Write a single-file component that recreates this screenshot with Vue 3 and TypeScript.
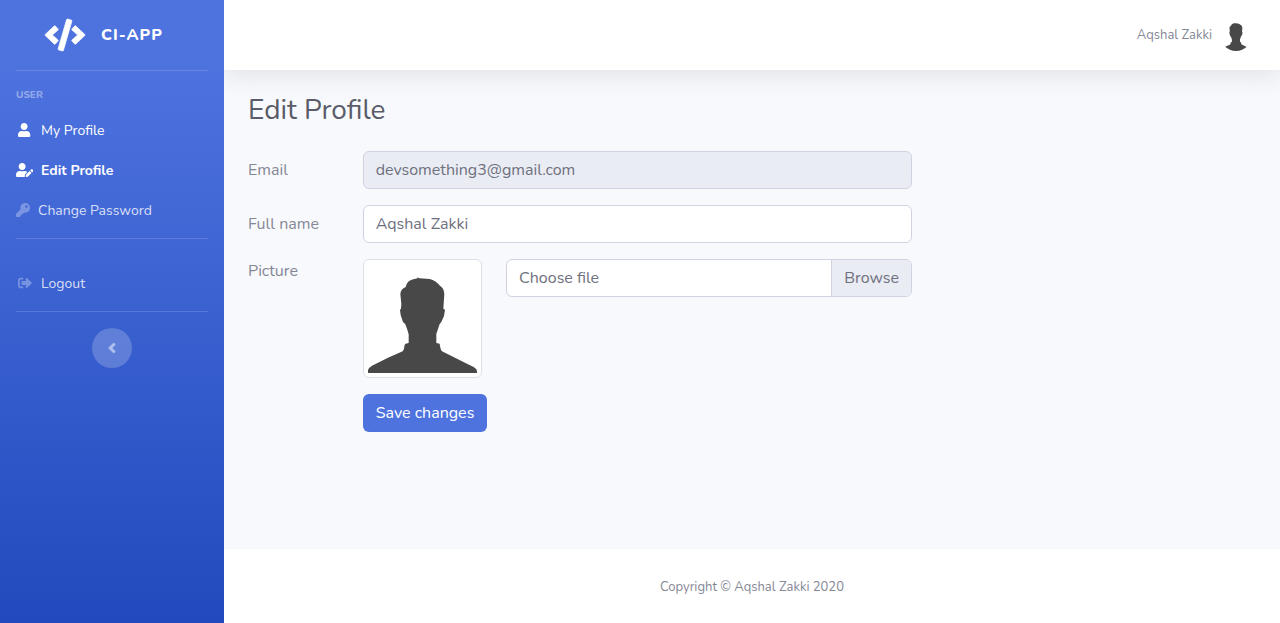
<script setup lang="ts">
import { ref } from 'vue'

interface Icon {
  width: number
  path: string
}

interface NavItem {
  label: string
  icon: Icon
  state: 'plain' | 'lit' | 'active'
  fixed: boolean
}

const code: Icon = {
  width: 640,
  path: 'M278.9 511.5l-61-17.7c-6.4-1.8-10-8.5-8.2-14.9L346.2 8.7c1.8-6.4 8.5-10 14.9-8.2l61 17.7c6.4 1.8 10 8.5 8.2 14.9L293.8 503.3c-1.9 6.4-8.5 10.1-14.9 8.2zm-114-112.2l43.5-46.4c4.6-4.9 4.3-12.7-.8-17.2L117 256l90.6-79.7c5.1-4.5 5.5-12.3.8-17.2l-43.5-46.4c-4.5-4.8-12.1-5.1-17-.5L3.8 247.2c-5.1 4.7-5.1 12.8 0 17.5l144.1 135.1c4.9 4.6 12.5 4.4 17-.5zm327.2.6l144.1-135.1c5.1-4.7 5.1-12.8 0-17.5L492.1 112.1c-4.8-4.5-12.4-4.3-17 .5L431.6 159c-4.6 4.9-4.3 12.7.8 17.2L523 256l-90.6 79.7c-5.1 4.5-5.5 12.3-.8 17.2l43.5 46.4c4.5 4.9 12.1 5.1 17 .6z',
}
const user: Icon = {
  width: 448,
  path: 'M224 256c70.7 0 128-57.3 128-128S294.7 0 224 0 96 57.3 96 128s57.3 128 128 128zm89.6 32h-16.7c-22.2 10.2-46.9 16-72.9 16s-50.6-5.8-72.9-16h-16.7C60.2 288 0 348.2 0 422.4V464c0 26.5 21.5 48 48 48h352c26.5 0 48-21.5 48-48v-41.6c0-74.2-60.2-134.4-134.4-134.4z',
}
const userEdit: Icon = {
  width: 640,
  path: 'M224 256c70.7 0 128-57.3 128-128S294.7 0 224 0 96 57.3 96 128s57.3 128 128 128zm89.6 32h-16.7c-22.2 10.2-46.9 16-72.9 16s-50.6-5.8-72.9-16h-16.7C60.2 288 0 348.2 0 422.4V464c0 26.5 21.5 48 48 48h274.9c-2.4-6.8-3.4-14-2.6-21.3l6.8-60.9 1.2-11.1 7.9-7.9 77.3-77.3c-24.5-27.7-60-45.5-99.9-45.5zm45.3 145.3l-6.8 61c-1.1 10.2 7.5 18.8 17.6 17.6l60.9-6.8 137.9-137.9-71.7-71.7-137.9 137.8zM633 268.9L595.1 231c-9.3-9.3-24.5-9.3-33.8 0l-37.8 37.8-4.1 4.1 71.8 71.7 41.8-41.8c9.3-9.4 9.3-24.5 0-33.9z',
}
const key: Icon = {
  width: 512,
  path: 'M512 176C512 273.2 433.2 352 336 352c-11.2 0-22.2-1.1-32.8-3.1l-24 27A24 24 0 0 1 261.2 384H224v40c0 13.3-10.7 24-24 24h-40v40c0 13.3-10.7 24-24 24H24c-13.3 0-24-10.7-24-24v-78.1c0-6.4 2.5-12.5 7-17l161.8-161.8C163.1 213.8 160 195.3 160 176 160 78.8 238.8 0 336 0c97.5 0 176 78.5 176 176zM336 128c0 26.5 21.5 48 48 48s48-21.5 48-48-21.5-48-48-48-48 21.5-48 48z',
}
const signOut: Icon = {
  width: 512,
  path: 'M497 273L329 441c-15 15-41 4.5-41-17v-96H152c-13.3 0-24-10.7-24-24v-96c0-13.3 10.7-24 24-24h136V88c0-21.4 25.9-32 41-17l168 168c9.3 9.4 9.3 24.6 0 34zM192 436v-40c0-6.6-5.4-12-12-12H96c-17.7 0-32-14.3-32-32V160c0-17.7 14.3-32 32-32h84c6.6 0 12-5.4 12-12V76c0-6.6-5.4-12-12-12H96c-53 0-96 43-96 96v192c0 53 43 96 96 96h84c6.6 0 12-5.4 12-12z',
}
const angleLeft: Icon = {
  width: 256,
  path: 'M31.7 239l136-136c9.4-9.4 24.6-9.4 33.9 0l22.6 22.6c9.4 9.4 9.4 24.6 0 33.9L127.9 256l96.4 96.4c9.4 9.4 9.4 24.6 0 33.9L201.7 409c-9.4 9.4-24.6 9.4-33.9 0l-136-136c-9.5-9.4-9.5-24.6-.1-34z',
}

const silhouette =
  'M0 328V318Q2 311 12 305L60 281L104 262Q109 256 110 242L113 239L122 237V211L118 197L112 181L105 174L98 153L96 137L99 134L100 120L97 90Q98 75 113 69Q117 50 136 46L149 43L146 40L154 43L185 45Q204 50 216 65Q228 72 229 90L226 134L231 137L228 156L220 174L215 180L205 210V237L215 239Q217 256 222 262L300 301L317 309Q327 315 327 321V328Z'

const navItems: NavItem[] = [
  { label: 'My Profile', icon: user, state: 'lit', fixed: true },
  { label: 'Edit Profile', icon: userEdit, state: 'active', fixed: true },
  { label: 'Change Password', icon: key, state: 'plain', fixed: false },
]

const email = ref('devsomething3@gmail.com')
const fullName = ref('Aqshal Zakki')
const fileName = ref('Choose file')

function onFile(event: Event) {
  const file = (event.target as HTMLInputElement).files?.[0]
  fileName.value = file ? file.name : 'Choose file'
}
</script>

<template>
  <div class="wrapper">
    <aside class="sidebar">
      <a class="brand" href="#">
        <svg class="brand-icon" :viewBox="`0 0 ${code.width} 512`" aria-hidden="true"><path :d="code.path" /></svg>
        <span>CI-APP</span>
      </a>
      <hr class="divider" />
      <div class="heading">USER</div>
      <nav class="nav">
        <a v-for="item in navItems" :key="item.label" href="#" class="nav-link" :class="item.state">
          <span class="nav-icon" :class="{ fixed: item.fixed }">
            <svg :viewBox="`0 0 ${item.icon.width} 512`" aria-hidden="true"><path :d="item.icon.path" /></svg>
          </span>
          <span class="nav-label">{{ item.label }}</span>
        </a>
      </nav>
      <hr class="divider" />
      <a href="#" class="nav-link logout">
        <span class="nav-icon fixed">
          <svg :viewBox="`0 0 ${signOut.width} 512`" aria-hidden="true"><path :d="signOut.path" /></svg>
        </span>
        <span class="nav-label">Logout</span>
      </a>
      <hr class="divider" />
      <button class="toggle" type="button" aria-label="Collapse sidebar">
        <svg :viewBox="`0 0 ${angleLeft.width} 512`" aria-hidden="true"><path :d="angleLeft.path" /></svg>
      </button>
    </aside>

    <div class="content">
      <header class="topbar">
        <a class="account" href="#">
          <span>Aqshal Zakki</span>
          <svg class="avatar" viewBox="0 0 328 328" aria-hidden="true"><path :d="silhouette" /></svg>
        </a>
      </header>

      <main class="main">
        <h1>Edit Profile</h1>
        <form class="form" @submit.prevent>
          <div class="row">
            <label class="caption" for="email">Email</label>
            <input id="email" v-model="email" class="control" type="text" readonly />
          </div>
          <div class="row">
            <label class="caption" for="name">Full name</label>
            <input id="name" v-model="fullName" class="control" type="text" />
          </div>
          <div class="row">
            <label class="caption top" for="image">Picture</label>
            <div class="field picture">
              <div class="thumb">
                <svg viewBox="0 0 328 328" role="img" aria-label="Profile picture"><path :d="silhouette" /></svg>
              </div>
              <label class="file">
                <input id="image" type="file" @change="onFile" />
                <span class="file-name">{{ fileName }}</span>
                <span class="browse">Browse</span>
              </label>
            </div>
          </div>
          <div class="row">
            <div class="field">
              <button class="save" type="submit">Save changes</button>
            </div>
          </div>
        </form>
      </main>

      <footer class="footer">Copyright © Aqshal Zakki 2020</footer>
    </div>
  </div>
</template>

<style>
body {
  margin: 0;
}
</style>

<style scoped>
.wrapper,
.wrapper * {
  box-sizing: border-box;
}
.wrapper {
  display: flex;
  min-height: 100vh;
  font-family: Nunito, Lato, 'Open Sans', sans-serif;
  font-size: 16px;
  line-height: 24px;
  color: #858796;
}
a {
  text-decoration: none;
}
svg {
  display: block;
  fill: currentColor;
}
.sidebar {
  display: flex;
  flex-direction: column;
  flex: 0 0 224px;
  background: linear-gradient(180deg, #4e73df 10%, #224abe 100%);
}
.brand {
  display: flex;
  align-items: center;
  justify-content: center;
  gap: 16px;
  height: 70px;
  padding-right: 16px;
  color: #fff;
  font-weight: 800;
  letter-spacing: 1px;
}
.brand-icon {
  height: 32px;
  overflow: visible;
  stroke: currentColor;
  stroke-width: 12;
}
.divider {
  width: calc(100% - 32px);
  margin: 0 16px;
  border: 0;
  border-top: 1px solid rgba(255, 255, 255, 0.15);
}
.heading {
  padding: 16px 16px 0;
  color: rgba(255, 255, 255, 0.4);
  font-size: 10px;
  font-weight: 800;
  line-height: 16px;
}
.nav {
  padding: 7px 0 8px;
}
.nav-link {
  display: flex;
  align-items: center;
  height: 40px;
  padding: 0 16px;
  gap: 8px;
  color: rgba(255, 255, 255, 0.8);
  font-size: 14px;
}
.nav-label {
  padding-top: 2px;
}
.nav-icon {
  display: flex;
  justify-content: center;
  color: rgba(255, 255, 255, 0.3);
}
.nav-icon.fixed {
  width: 17px;
}
.nav-icon svg {
  flex: none;
  height: 14px;
}
.lit,
.active,
.lit .nav-icon,
.active .nav-icon {
  color: #fff;
}
.active {
  font-weight: 700;
}
.logout {
  margin: 24px 0 8px;
}
.toggle {
  display: flex;
  align-items: center;
  justify-content: center;
  align-self: center;
  width: 40px;
  height: 40px;
  margin: 16px 0;
  padding: 0;
  border: 0;
  border-radius: 50%;
  background: rgba(255, 255, 255, 0.2);
  color: #afbfed;
}
.toggle svg {
  height: 16px;
  stroke: currentColor;
  stroke-width: 20;
}
.content {
  display: flex;
  flex: 1;
  flex-direction: column;
  min-width: 0;
  overflow: hidden;
  background: #f8f9fc;
}
.topbar {
  display: flex;
  justify-content: flex-end;
  height: 70px;
  padding: 0 28px;
  background: #fff;
  box-shadow: 0 2px 28px rgba(58, 59, 69, 0.15);
}
.account {
  display: flex;
  align-items: center;
  gap: 8px;
  color: #858796;
  font-size: 13px;
}
.avatar {
  width: 32px;
  height: 32px;
  border-radius: 50%;
  color: #484848;
}
.main {
  flex: 1;
  padding: 24px;
}
h1 {
  margin: 0 0 24px;
  color: #5a5c69;
  font-size: 28px;
  font-weight: 400;
  line-height: 33px;
}
.form {
  display: flex;
  flex-direction: column;
  gap: 16px;
  width: calc(66.6667% - 8px);
}
.row {
  display: flex;
  justify-content: flex-end;
}
.caption {
  flex: 1;
  padding-top: 7px;
}
.caption.top {
  padding-top: 0;
}
.control,
.field {
  width: calc(83.3333% - 4px);
}
.control {
  height: 38px;
  padding: 6px 12px;
  border: 1px solid #d1d3e2;
  border-radius: 6px;
  background: #fff;
  color: #6e707e;
  font: inherit;
}
.control[readonly] {
  background: #eaecf4;
}
.picture {
  display: flex;
  align-items: flex-start;
  gap: 24px;
}
.thumb {
  width: calc(25% - 18px);
  padding: 4px;
  border: 1px solid #dddfeb;
  border-radius: 6px;
  background: #fff;
  color: #484848;
}
.file {
  position: relative;
  display: flex;
  flex: 1;
  height: 38px;
  overflow: hidden;
  border: 1px solid #d1d3e2;
  border-radius: 6px;
  background: #fff;
  color: #6e707e;
}
.file input {
  position: absolute;
  inset: 0;
  width: 100%;
  opacity: 0;
}
.file-name {
  flex: 1;
  padding: 6px 12px;
}
.browse {
  padding: 6px 12px;
  border-left: 1px solid #d1d3e2;
  background: #eaecf4;
}
.save {
  display: block;
  height: 38px;
  padding: 0 13px;
  border: 0;
  border-radius: 6px;
  background: #4e73df;
  color: #fff;
  font: inherit;
}
.footer {
  padding: 26px 24px 24px;
  background: #fff;
  font-size: 13px;
  text-align: center;
}
</style>
